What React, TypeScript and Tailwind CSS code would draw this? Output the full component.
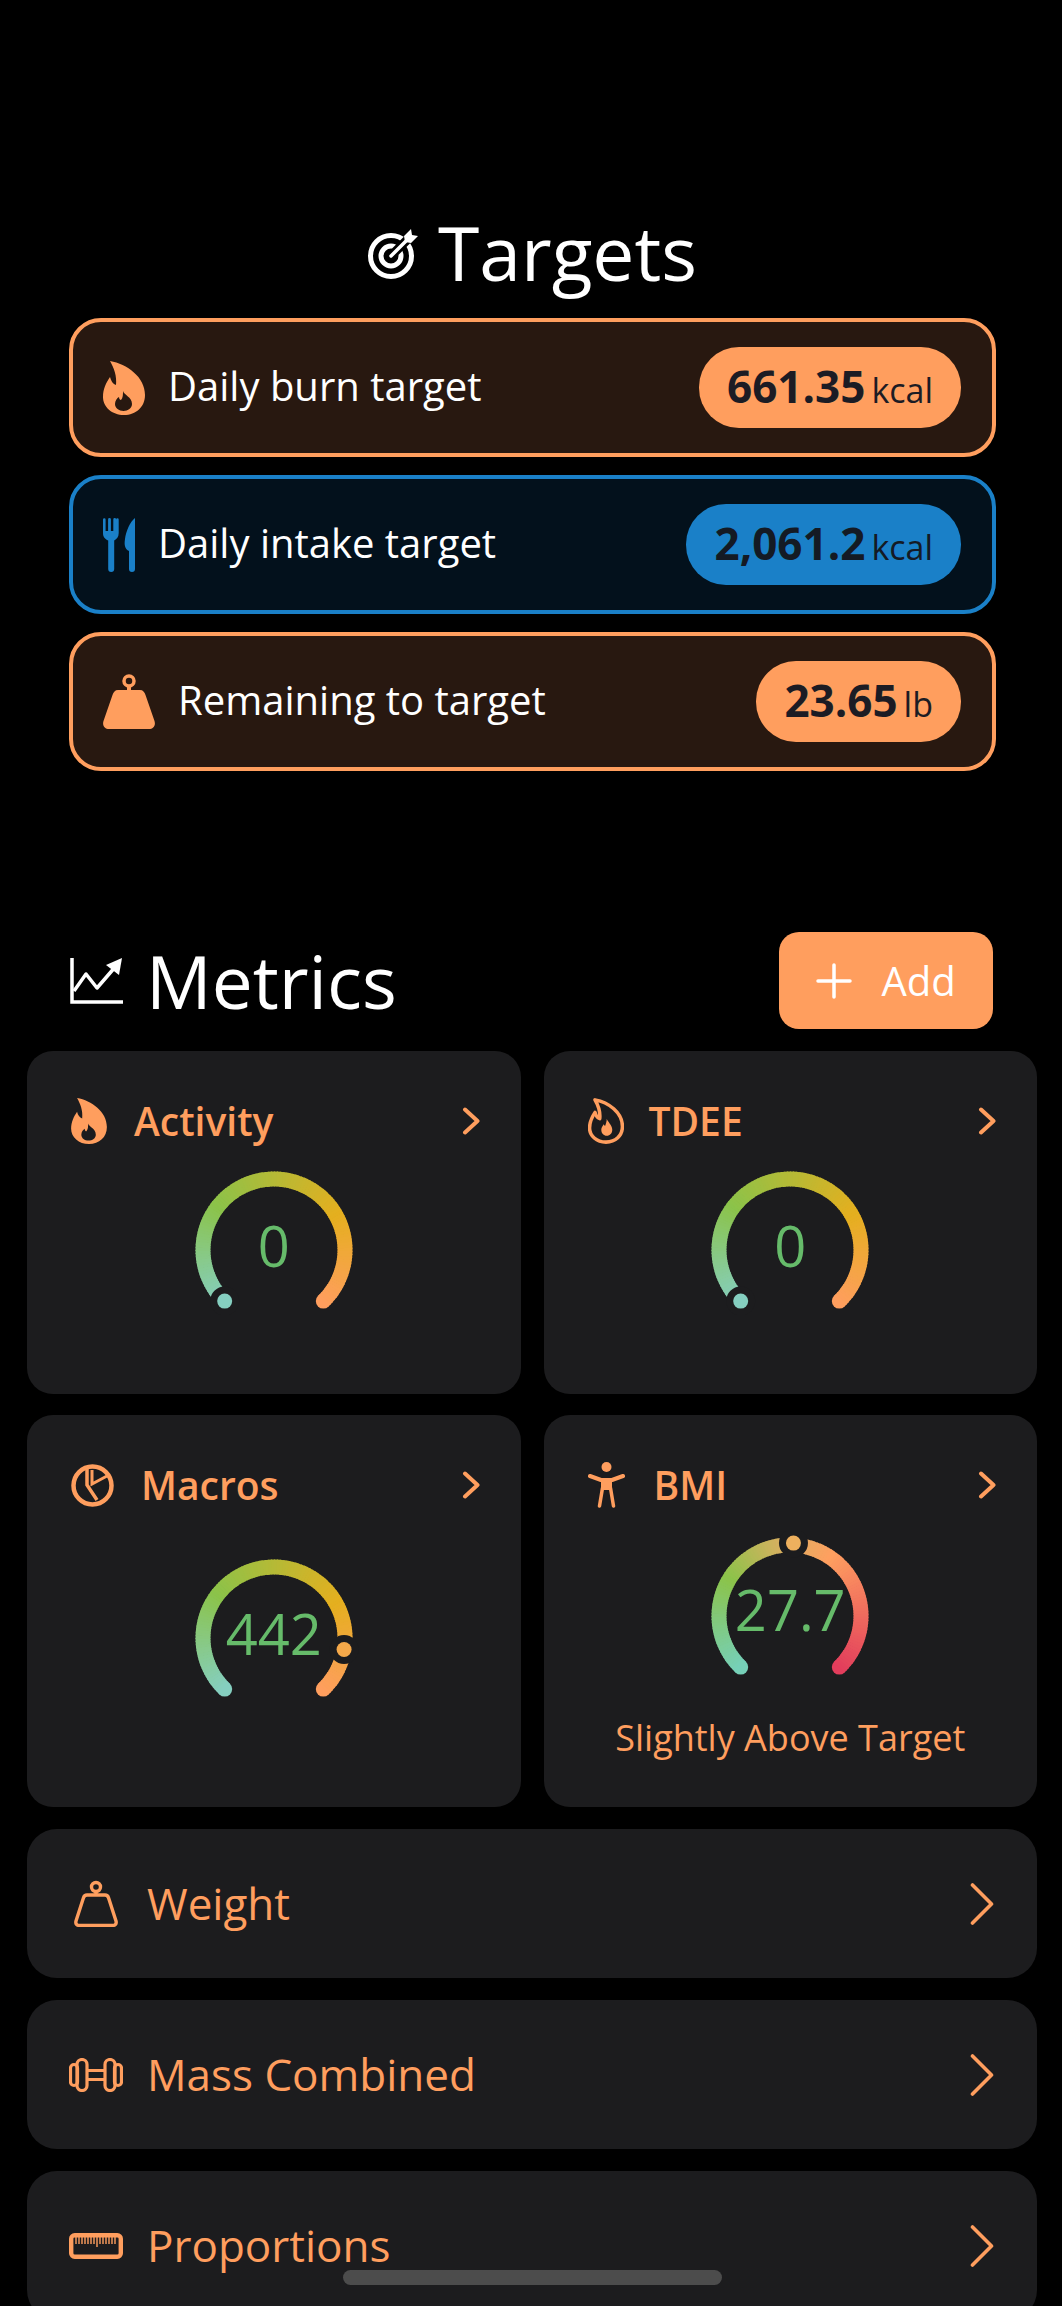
import React from 'react';

const ORANGE = '#ff9e5e';
const CARD = '#1c1c1e';

const hex = (c: string) => [1, 3, 5].map((i) => parseInt(c.slice(i, i + 2), 16));

const mix = (stops: [number, string][], t: number) => {
  for (let i = 1; i < stops.length; i++) {
    if (t <= stops[i][0]) {
      const [t0, c0] = stops[i - 1];
      const [t1, c1] = stops[i];
      const k = (t - t0) / (t1 - t0);
      const a = hex(c0);
      const b = hex(c1);
      return `rgb(${a.map((v, j) => Math.round(v + (b[j] - v) * k)).join(',')})`;
    }
  }
  return stops[stops.length - 1][1];
};

const point = (t: number, r: number) => {
  const a = ((134 + 272 * t) * Math.PI) / 180;
  return [r * Math.cos(a), r * Math.sin(a)];
};

const Gauge = ({
  value,
  dot,
  dotColor,
  stops,
  shift,
}: {
  value: string;
  dot: number;
  dotColor: string;
  stops: [number, string][];
  shift: string;
}) => {
  const R = 71;
  const N = 120;
  const [sx, sy] = point(0, R);
  const [ex, ey] = point(1, R);
  const [dx, dy] = point(dot, R + (dot > 0.8 ? 0 : dot > 0 ? 2 : 0));
  return (
    <div className="relative mx-auto h-[150px] w-[170px]">
      <svg width="170" height="150" viewBox="-85 -85 170 150">
        <circle cx={sx} cy={sy} r="7.5" fill={stops[0][1]} />
        <circle cx={ex} cy={ey} r="7.5" fill={stops[stops.length - 1][1]} />
        {Array.from({ length: N }).map((_, i) => {
          const [x0, y0] = point(i / N, R);
          const [x1, y1] = point(Math.min(1, (i + 1.3) / N), R);
          return (
            <path
              key={i}
              d={`M${x0} ${y0}A${R} ${R} 0 0 1 ${x1} ${y1}`}
              fill="none"
              stroke={mix(stops, i / N)}
              strokeWidth="15"
            />
          );
        })}
        <circle cx={dx} cy={dy} r="14.5" fill={CARD} />
        <circle cx={dx} cy={dy} r="7.5" fill={dotColor} />
      </svg>
      <div className={`absolute left-0 right-0 top-0 text-center text-[56px] font-normal leading-[60px] text-[#66bb6a] ${shift}`}>
        {value}
      </div>
    </div>
  );
};

const greenOrange: [number, string][] = [
  [0, '#85cfc0'],
  [0.3, '#8bc34a'],
  [0.72, '#e5af1f'],
  [1, '#ff9e5e'],
];
const greenRed: [number, string][] = [
  [0, '#76d0b8'],
  [0.28, '#8bc34a'],
  [0.47, '#d8b060'],
  [0.62, '#ffa060'],
  [1, '#e23d5c'],
];

const Chevron = () => (
  <svg width="18" height="28" viewBox="0 0 18 28" fill="none" stroke={ORANGE} strokeWidth="4" strokeLinecap="round" strokeLinejoin="round">
    <path d="M3 2.5 15.500 14 3 25.5" />
  </svg>
);

const BigChevron = () => (
  <svg width="24" height="42" viewBox="0 0 24 42" fill="none" stroke={ORANGE} strokeWidth="3.6" strokeLinecap="round" strokeLinejoin="round">
    <path d="M2.5 2 21.5 21 2.5 40" />
  </svg>
);

const flame =
  'M7 0C24 3 42 16 42 34C42 46 33 54 21 54C9 54 0 46 0 36C0 28 3 22 7 16C8 20 10 23 13 24C14 15 11 7 7 0Z';

const FlameFill = ({ w, h }: { w: number; h: number }) => (
  <svg width={w} height={h} viewBox="0 0 42 54">
    <path
      fillRule="evenodd"
      fill={ORANGE}
      d={`${flame}M20 30C21 34 29 36 29 43C29 47 25 50 20.500 50C16 50 12 47 12 43C12 40 14 37 16 36C16 38 17 39 18 39C20 37 20 33 20 30Z`}
    />
  </svg>
);

const FlameLine = () => (
  <svg width="36" height="46" viewBox="-2 -2 46 58">
    <path d={flame} fill="none" stroke={ORANGE} strokeWidth="4.5" strokeLinejoin="round" />
    <path fill={ORANGE} d="M22 24C23 28 29 32 29 38C29 43 26 46 22 46C18 46 15 43 15 38C15 35 17 33 18 31C18.500 32 19 33 20 33C21 30 22 27 22 24Z" />
  </svg>
);

const TargetIcon = () => (
  <svg width="50" height="50" viewBox="0 0 50 50" fill="none">
    <circle cx="23" cy="27" r="20.500" stroke="#fff" strokeWidth="5" />
    <circle cx="23" cy="27" r="10" stroke="#fff" strokeWidth="5" />
    <path d="M23 27 46 4" stroke="#000" strokeWidth="9" />
    <path d="M23 27 42 8" stroke="#fff" strokeWidth="3.5" strokeLinecap="round" />
    <path d="M36 7 43 0 44 6 50 7 43 14 37 13Z" fill="#fff" />
  </svg>
);

const Cutlery = () => (
  <svg width="32" height="54" viewBox="0 0 32 54" fill="#1a80c8">
    <path d="M0 1.500a1.300 1.300 0 0 1 2.600 0V13h2.500V1.500a1.400 1.400 0 0 1 2.800 0V13h2.400V1.500a1.400 1.400 0 0 1 2.800 0V1.500a1.300 1.300 0 0 1 2.600 0V15c0 4-2 6-4.500 7.500V51a3 3 0 0 1-6 0V22.500C2 21 0 19 0 15Z" />
    <path d="M32 2V51a3 3 0 0 1-6 0V33C22 31 21 27 22 21C23 13 27 4 32 0Z" />
  </svg>
);

const BellFill = () => (
  <svg width="52" height="55" viewBox="0 0 52 55">
    <circle cx="26" cy="7" r="5" fill="none" stroke={ORANGE} strokeWidth="3.5" />
    <path fill={ORANGE} d="M24 11h4v6h-4z" />
    <path fill={ORANGE} d="M15 16H37C40 16 41.500 18 42.500 21L51.500 47C53 52 50 55 46 55H6C2 55-1 52 .5 47L9.500 21C10.500 18 12 16 15 16Z" />
  </svg>
);

const BellLine = () => (
  <svg width="44" height="47" viewBox="0 0 44 47" fill="none" stroke={ORANGE} strokeWidth="3.4">
    <circle cx="22" cy="7" r="4.500" />
    <path d="M22 11.500V15" />
    <path strokeLinejoin="round" d="M13 15H31C33 15 34 16 34.600 18L42 41C42.800 44 41 45.500 38.500 45.500H5.500C3 45.500 1.200 44 2 41L9.400 18C10 16 11 15 13 15Z" />
  </svg>
);

const ChartIcon = () => (
  <svg width="54" height="46" viewBox="0 0 54 46" fill="none" stroke="#fff" strokeWidth="3.5">
    <path d="M2 0V44H53" />
    <path d="M4 33 16 16 27 30 46 8" strokeLinejoin="round" />
    <path d="M36 7 52 0 49 17Z" fill="#fff" stroke="none" />
  </svg>
);

const PieIcon = () => (
  <svg width="43" height="43" viewBox="0 0 43 43" fill="none" stroke={ORANGE}>
    <circle cx="21.500" cy="21.500" r="19" strokeWidth="4.5" />
    <path d="M16 3V21L26 36" strokeWidth="3.5" />
    <path d="M21 6V20L36 12" strokeWidth="3" />
  </svg>
);

const PersonIcon = () => (
  <svg width="37" height="46" viewBox="0 0 37 46">
    <circle cx="18.500" cy="5" r="5" fill={ORANGE} />
    <path d="M2 14 13 18H24L35 14" fill="none" stroke={ORANGE} strokeWidth="4" strokeLinecap="round" strokeLinejoin="round" />
    <path d="M13 16H24V28H13Z" fill={ORANGE} />
    <path d="M14.500 26 11.500 44M22.500 26 25.500 44" fill="none" stroke={ORANGE} strokeWidth="3.500" strokeLinecap="round" />
  </svg>
);

const Dumbbell = () => (
  <svg width="54" height="34" viewBox="0 0 54 34" fill="none" stroke={ORANGE} strokeWidth="3.2">
    <rect x="1.500" y="6.500" width="7" height="21" rx="3.500" />
    <rect x="8" y="1.500" width="10" height="31" rx="5" />
    <rect x="36" y="1.500" width="10" height="31" rx="5" />
    <rect x="45.500" y="6.500" width="7" height="21" rx="3.500" />
    <path d="M18 12.500H36M18 21.500H36" />
  </svg>
);

const Ruler = () => (
  <svg width="54" height="26" viewBox="0 0 54 26" fill="none" stroke={ORANGE}>
    <rect x="2.200" y="2.200" width="49.600" height="21.600" rx="3.500" strokeWidth="4.400" />
    <path
      strokeWidth="1.400"
      d="M7 4V11M10 4V11M13 4V11M16 4V11M19 4V11M22 4V11M25 4V11M28 4V14M31 4V11M34 4V11M37 4V11M40 4V11M43 4V11M46 4V11"
    />
  </svg>
);

const TargetRow = ({
  icon,
  label,
  value,
  unit,
  blue,
}: {
  icon: React.ReactNode;
  label: string;
  value: string;
  unit: string;
  blue?: boolean;
}) => (
  <div
    className={
      blue
        ? 'flex h-[139px] items-center justify-between rounded-[32px] border-4 border-[#1a80c8] bg-[#03111c] pl-[30px] pr-[31px]'
        : 'flex h-[139px] items-center justify-between rounded-[32px] border-4 border-[#ff9e5e] bg-[#281810] pl-[30px] pr-[31px]'
    }
  >
    <div className="flex items-center gap-[23px] text-[40px] font-medium leading-none text-white">
      {icon}
      <span className="-mt-[3px]">{label}</span>
    </div>
    <div
      className={
        blue
          ? 'flex h-[81px] items-baseline gap-[6px] rounded-[40px] bg-[#1a80c8] px-[28px] pt-[16px] text-[#141a24]'
          : 'flex h-[81px] items-baseline gap-[6px] rounded-[40px] bg-[#ff9e5e] px-[28px] pt-[16px] text-[#1c1c24]'
      }
    >
      <span className="text-[44px] font-bold leading-[46px]">{value}</span>
      <span className="text-[34px] font-normal leading-[46px]">{unit}</span>
    </div>
  </div>
);

const MetricCard = ({
  icon,
  title,
  gap,
  children,
  height,
}: {
  icon: React.ReactNode;
  title: string;
  gap: string;
  children: React.ReactNode;
  height: string;
}) => (
  <div className={`rounded-[26px] bg-[#1c1c1e] pt-[47px] ${height}`}>
    <div className="flex h-[46px] items-center justify-between pl-[44px] pr-[41px]">
      <div className={`flex items-center text-[39px] font-semibold leading-none text-[#ff9e5e] ${gap}`}>
        {icon}
        <span className="-mt-[2px]">{title}</span>
      </div>
      <Chevron />
    </div>
    {children}
  </div>
);

const ListRow = ({ icon, title, iconBox }: { icon: React.ReactNode; title: string; iconBox: string }) => (
  <div className="flex h-[149px] shrink-0 items-center justify-between rounded-[30px] bg-[#1c1c1e] pl-[42px] pr-[43px]">
    <div className="flex items-center text-[44px] font-medium leading-none text-[#ff9e5e]">
      <div className={`flex w-[78px] ${iconBox}`}>{icon}</div>
      <span className="-mt-[2px]">{title}</span>
    </div>
    <BigChevron />
  </div>
);

export default function App() {
  return (
    <div className="relative h-[2306px] w-[1062px] overflow-hidden bg-black font-['Open_Sans','Noto_Sans',sans-serif]">
      <div className="ml-[69px] w-[927px] pt-[209px]">
        <div className="flex h-[90px] items-center justify-center gap-[20px] text-[75px] font-medium leading-none text-white">
          <TargetIcon />
          <span className="-mt-[4px]">Targets</span>
        </div>
        <div className="mt-[19px] flex flex-col gap-[18px]">
          <TargetRow icon={<FlameFill w={42} h={54} />} label="Daily burn target" value="661.35" unit="kcal" />
          <TargetRow icon={<Cutlery />} label="Daily intake target" value="2,061.2" unit="kcal" blue />
          <TargetRow icon={<BellFill />} label="Remaining to target" value="23.65" unit="lb" />
        </div>
      </div>

      <div className="ml-[70px] mt-[161px] flex h-[97px] w-[923px] items-center justify-between">
        <div className="flex items-center gap-[22px] text-[73px] font-medium leading-none text-white">
          <ChartIcon />
          <span>Metrics</span>
        </div>
        <div className="flex h-[97px] w-[214px] items-center justify-center gap-[29px] rounded-[20px] bg-[#ff9e5e] text-[40px] font-normal leading-none text-white">
          <svg width="36" height="36" viewBox="0 0 36 36" stroke="#fff" strokeWidth="3.500" strokeLinecap="round">
            <path d="M18 2V34M2 18H34" />
          </svg>
          <span>Add</span>
        </div>
      </div>

      <div className="ml-[27px] mt-[22px] grid w-[1010px] grid-cols-2 gap-x-[23px] gap-y-[21px]">
        <MetricCard height="h-[343px]" gap="gap-[27px]" title="Activity" icon={<FlameFill w={36} h={46} />}>
          <div className="mt-[21px]">
            <Gauge value="0" dot={0} dotColor="#85cfc0" stops={greenOrange} shift="mt-[50px]" />
          </div>
        </MetricCard>
        <MetricCard height="h-[343px]" gap="gap-[25px]" title="TDEE" icon={<FlameLine />}>
          <div className="mt-[21px]">
            <Gauge value="0" dot={0} dotColor="#85cfc0" stops={greenOrange} shift="mt-[50px]" />
          </div>
        </MetricCard>
        <MetricCard height="h-[392px]" gap="gap-[27px]" title="Macros" icon={<PieIcon />}>
          <div className="mt-[45px]">
            <Gauge value="442" dot={0.865} dotColor="#f5a94a" stops={greenOrange} shift="mt-[50px]" />
          </div>
        </MetricCard>
        <MetricCard height="h-[392px]" gap="gap-[29px]" title="BMI" icon={<PersonIcon />}>
          <div className="mt-[23px]">
            <Gauge value="27.7" dot={0.51} dotColor="#eeb05e" stops={greenRed} shift="mt-[48px]" />
          </div>
          <div className="mt-[34px] text-center text-[36px] font-medium leading-[46px] text-[#ff9e5e]">
            Slightly Above Target
          </div>
        </MetricCard>
      </div>

      <div className="ml-[27px] mt-[22px] flex w-[1010px] flex-col gap-[22px]">
        <ListRow title="Weight" iconBox="pl-[5px]" icon={<BellLine />} />
        <ListRow title="Mass Combined" iconBox="" icon={<Dumbbell />} />
        <ListRow title="Proportions" iconBox="" icon={<Ruler />} />
      </div>

      <div className="absolute bottom-[21px] left-[343px] h-[15px] w-[379px] rounded-full bg-[#4c4c4c]" />
    </div>
  );
}
